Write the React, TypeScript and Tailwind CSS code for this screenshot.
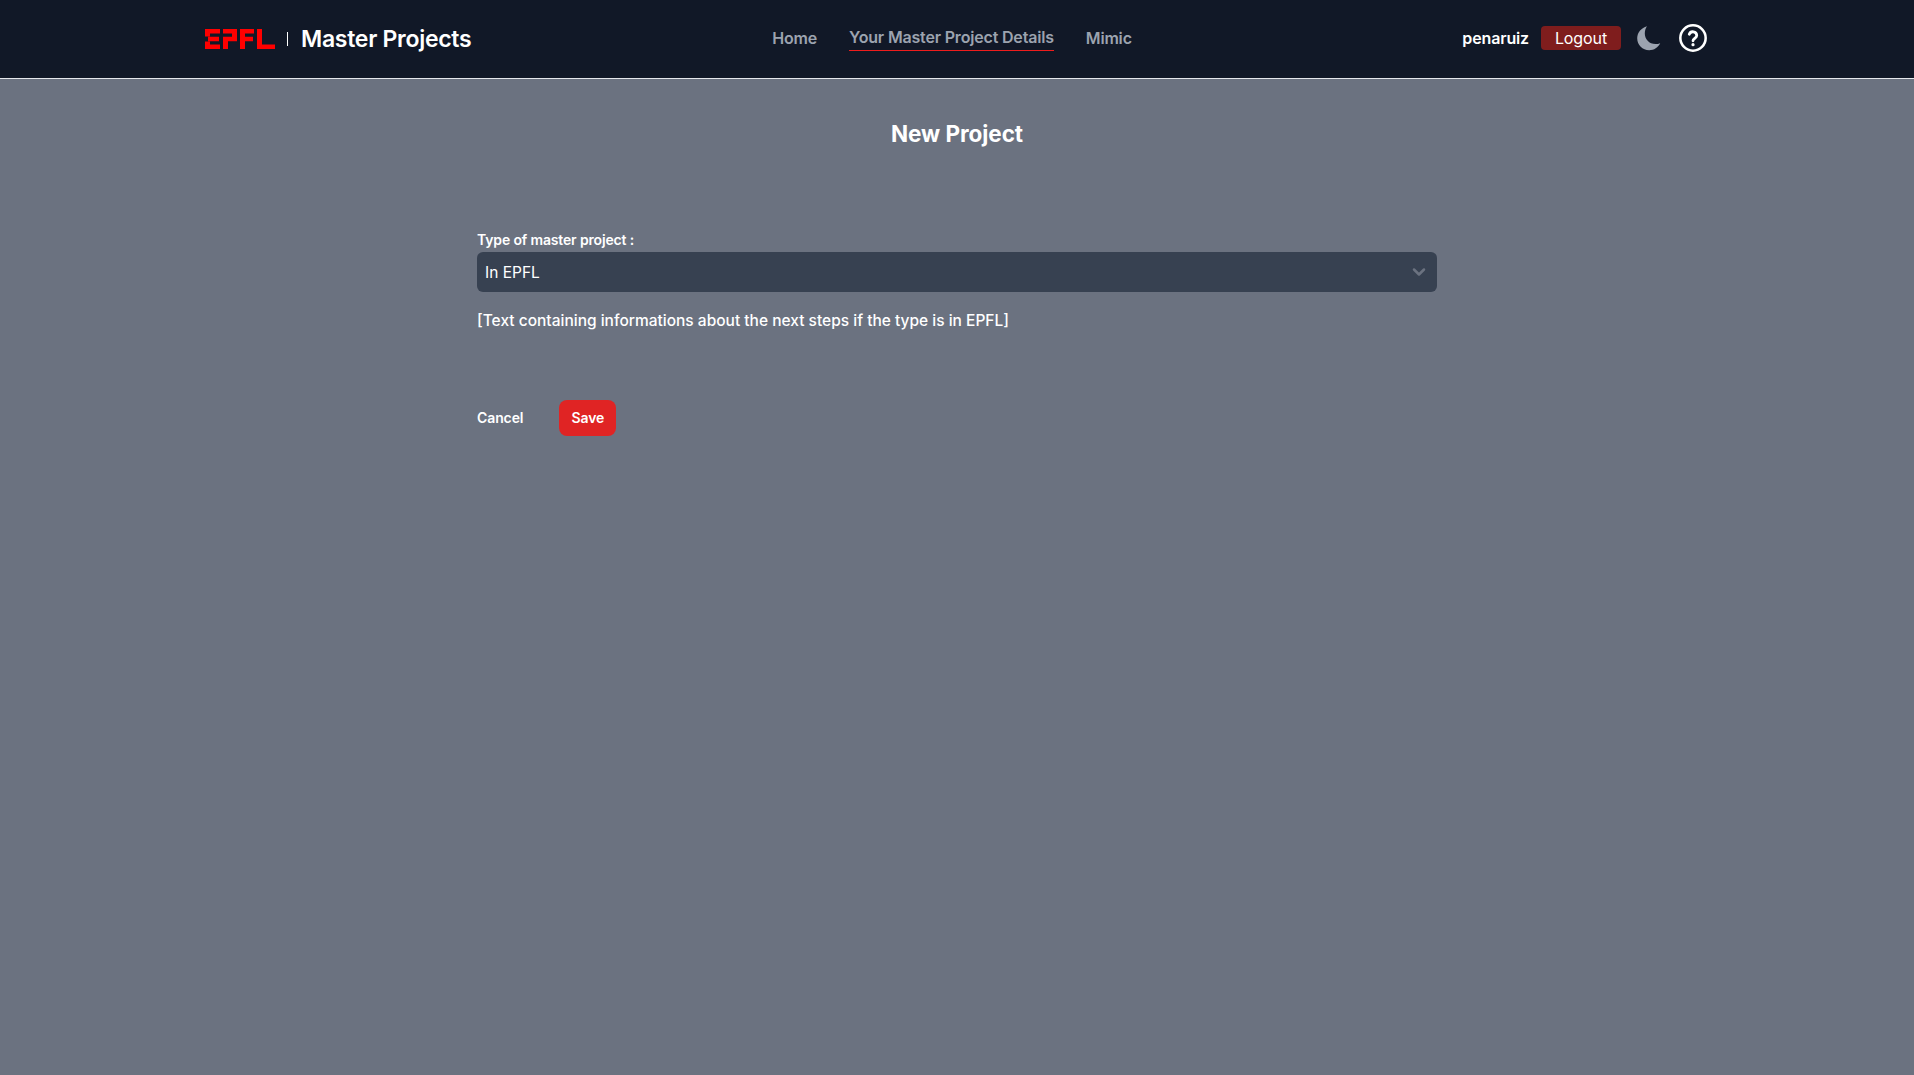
import React from "react";
import { ChevronDown } from "lucide-react";

function Logo() {
  return (
    <svg width="70" height="20" viewBox="0 0 70 20" className="block" fill="#ff0000">
      <path d="M0 0H15V4.5H5V7.5H0ZM3 7.7H14V12.2H3ZM0 12.5H5V15.5H15V20H0Z" />
      <path d="M18 0H32V12.2H23V20H18V7.7H27V4.5H18Z" />
      <path d="M35 0H49V4.5H40V7.7H48V12.2H40V20H35Z" />
      <path d="M52 0H57V15.5H70V20H52Z" />
    </svg>
  );
}

export default function App() {
  return (
    <div className="min-h-[1075px] bg-[#6b7280] font-['Inter',sans-serif] text-white">
      <header className="h-[79px] bg-[#111827] border-b border-[#e5e7eb]">
        <div className="mx-auto flex h-full w-[1504px] items-center justify-between">
          <div className="flex w-[400px] items-center">
            <Logo />
            <span className="ml-[12px] h-[14px] w-px bg-white" />
            <span className="ml-[13px] text-[23px] leading-8 font-semibold tracking-[-0.28px]">Master Projects</span>
          </div>
          <nav className="-mt-0.5 mr-[10px] flex items-center gap-8 text-base font-semibold tracking-[-0.18px] text-[#9ca3af]">
            <a>Home</a>
            <a className="border-b border-[#ef1c1c] leading-[25px]">Your Master Project Details</a>
            <a>Mimic</a>
          </nav>
          <div className="-mt-0.5 flex w-[400px] items-center justify-end">
            <span className="text-base font-semibold tracking-[-0.15px]">penaruiz</span>
            <button className="ml-3 h-6 w-20 rounded bg-[#7f1d1d] text-base tracking-[-0.1px]">Logout</button>
            <svg className="ml-[14px] block" width="28" height="28" viewBox="0 0 28 28" fill="#9ca3af">
              <path d="M12 2.2C6.6 3.6 2.2 8.4 2.2 14.2c0 6.6 5.4 12 12 12 4.8 0 9-2.8 11-7-1.2.5-3 .9-4.6.9-6.6 0-10.8-5.2-10.8-10.6 0-2.7 .8-5.4 2.2-7.3Z" />
            </svg>
            <svg className="ml-[14px] block" width="32" height="32" viewBox="0 0 24 24" fill="none" stroke="white" strokeWidth="1.9" strokeLinecap="round" strokeLinejoin="round">
              <circle cx="12" cy="12" r="9.5" />
              <path d="M9.2 9.2a2.9 2.9 0 0 1 5.6 .9c0 1.9-2.8 2.4-2.8 4" strokeWidth="2.1" />
              <path d="M12 17h.01" strokeWidth="2.4" />
            </svg>
          </div>
        </div>
      </header>
      <main className="mx-auto w-[960px] pt-[39px]">
        <h1 className="text-center text-[22.5px] leading-8 font-bold tracking-[-0.05px]">New Project</h1>
        <label className="mt-[80px] block text-sm leading-5 font-semibold tracking-[-0.15px]">Type of master project :</label>
        <div className="mt-[2px] flex h-10 items-center justify-between rounded-md bg-[#374151] pl-2 pr-[8px] text-[15.5px]">
          <span className="mt-px">In EPFL</span>
          <ChevronDown className="text-[#6b7280]" size={20} strokeWidth={3} />
        </div>
        <p className="mt-[17px] text-[15.5px] leading-6 font-medium">[Text containing informations about the next steps if the type is in EPFL]</p>
        <div className="mt-[67px] flex items-center gap-9">
          <button className="text-sm font-semibold tracking-[-0.1px]">Cancel</button>
          <button className="h-9 w-[57px] rounded-lg bg-[#e02424] text-sm font-semibold tracking-[-0.1px]">Save</button>
        </div>
      </main>
    </div>
  );
}
